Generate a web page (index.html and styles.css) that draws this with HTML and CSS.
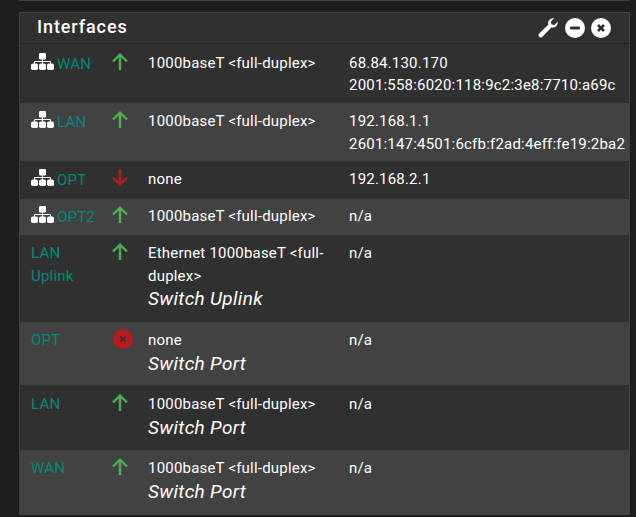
FILE: index.html
```html
<!DOCTYPE html>
<html lang="en">

<head>
    <meta charset="UTF-8">
    <title>Interfaces</title>
    <link rel="stylesheet" href="styles.css">
</head>

<body>

    <div class="prev-panel"></div>

    <div class="panel">

        <div class="panel-heading">
            <h2>Interfaces</h2>
            <div class="panel-icons">
                <svg class="wrench" width="22" height="22" viewBox="0 0 22 22"><path fill="#fff" d="M20.6 4.6c.3 1.800-.2 3.500-1.500 4.700-1.300 1.300-3.100 1.700-4.800 1.300L5.400 19.800c-.9.900-2.300.9-3.200 0-.9-.9-.9-2.300 0-3.200l9.100-8.900c-.5-1.700 0-3.600 1.300-4.900 1.200-1.200 2.900-1.700 4.500-1.500l-3.200 3.100.7 3 3 .7 3-3.500z"/></svg>
                <span class="round-btn"><svg width="20" height="20" viewBox="0 0 20 20"><rect x="5" y="8.500" width="10" height="3" rx="1" fill="#303030"/></svg></span>
                <span class="round-btn"><svg width="20" height="20" viewBox="0 0 20 20"><path d="M7 7l6 6M13 7l-6 6" stroke="#303030" stroke-width="2.600"/></svg></span>
            </div>
        </div>

        <div class="row row-wan">
            <div class="col-name"><svg class="net"><use href="#sitemap"/></svg><a href="#">WAN</a></div>
            <div class="col-status"><svg class="arrow"><use href="#up"/></svg></div>
            <div class="col-media">1000baseT &lt;full-duplex&gt;</div>
            <div class="col-ip">68.84.130.170<br>2001:558:6020:118:9c2:3e8:7710:a69c</div>
        </div>

        <div class="row row-lan">
            <div class="col-name"><svg class="net"><use href="#sitemap"/></svg><a href="#">LAN</a></div>
            <div class="col-status"><svg class="arrow"><use href="#up"/></svg></div>
            <div class="col-media">1000baseT &lt;full-duplex&gt;</div>
            <div class="col-ip">192.168.1.1<br>2601:147:4501:6cfb:f2ad:4eff:fe19:2ba2</div>
        </div>

        <div class="row row-opt">
            <div class="col-name"><svg class="net"><use href="#sitemap"/></svg><a href="#">OPT</a></div>
            <div class="col-status"><svg class="arrow"><use href="#down"/></svg></div>
            <div class="col-media">none</div>
            <div class="col-ip">192.168.2.1</div>
        </div>

        <div class="row row-opt2">
            <div class="col-name"><svg class="net"><use href="#sitemap"/></svg><a href="#">OPT2</a></div>
            <div class="col-status"><svg class="arrow"><use href="#up"/></svg></div>
            <div class="col-media">1000baseT &lt;full-duplex&gt;</div>
            <div class="col-ip">n/a</div>
        </div>

        <div class="row row-uplink">
            <div class="col-name"><a href="#">LAN Uplink</a></div>
            <div class="col-status"><svg class="arrow"><use href="#up"/></svg></div>
            <div class="col-media">Ethernet 1000baseT &lt;full-duplex&gt;<em>Switch Uplink</em></div>
            <div class="col-ip">n/a</div>
        </div>

        <div class="row row-port">
            <div class="col-name"><a href="#">OPT</a></div>
            <div class="col-status"><span class="no-link"><svg width="20" height="20" viewBox="0 0 20 20"><path d="M7.200 7.200l5.600 5.600M12.800 7.200l-5.600 5.600" stroke="#4a2a2a" stroke-width="2.200"/></svg></span></div>
            <div class="col-media">none<em>Switch Port</em></div>
            <div class="col-ip">n/a</div>
        </div>

        <div class="row row-low">
            <div class="col-name"><a href="#">LAN</a></div>
            <div class="col-status"><svg class="arrow"><use href="#up"/></svg></div>
            <div class="col-media">1000baseT &lt;full-duplex&gt;<em>Switch Port</em></div>
            <div class="col-ip">n/a</div>
        </div>

        <div class="row">
            <div class="col-name"><a href="#">WAN</a></div>
            <div class="col-status"><svg class="arrow"><use href="#up"/></svg></div>
            <div class="col-media">1000baseT &lt;full-duplex&gt;<em>Switch Port</em></div>
            <div class="col-ip">n/a</div>
        </div>

    </div>

    <svg class="defs" width="0" height="0">
        <symbol id="sitemap" viewBox="0 0 23 17">
            <g fill="#fff">
                <rect x="8" width="7" height="6.500" rx="1.200"/>
                <rect y="10.500" width="7" height="6.500" rx="1.800"/>
                <rect x="8" y="10.500" width="7" height="6.500" rx="1.800"/>
                <rect x="16" y="10.500" width="7" height="6.500" rx="1.800"/>
            </g>
            <path fill="none" stroke="#fff" d="M11.500 6v5M3.500 11V8.500h16V11"/>
        </symbol>
        <symbol id="up" viewBox="0 0 16 17">
            <path fill="none" stroke="#4caf50" stroke-width="2.400" d="M8 17V2M1 8.500L8 1.700l7 6.800"/>
        </symbol>
        <symbol id="down" viewBox="0 0 16 17">
            <path fill="none" stroke="#b71c1c" stroke-width="2.400" d="M8 0V15M1 8.500l7 6.800 7-6.800"/>
        </symbol>
    </svg>

</body>

</html>
```

FILE: styles.css
```css
* {
    margin: 0;
    padding: 0;
    box-sizing: border-box;
}

html,
body {
    height: 517px;
    overflow: hidden;
}

body {
    background-color: #1e1e1e;
    font-family: Roboto, "Liberation Sans", sans-serif;
    font-size: 15px;
    line-height: 22.5px;
    letter-spacing: .2px;
    color: #fff;
    padding-left: 19px;
    padding-right: 6px;
}

.prev-panel {
    height: 1px;
    background-color: #424242;
    margin-bottom: 11px;
}

.panel {
    background-color: #303030;
    border: 1px solid #424242;
    border-bottom: 0;
}

.panel-heading {
    display: flex;
    justify-content: space-between;
    align-items: center;
    height: 31px;
    padding: 0 18px 1px 17px;
    border-bottom: 1px solid #232323;
}

.panel-heading h2 {
    font-size: 18px;
    font-weight: 500;
    letter-spacing: .9px;
}

.panel-icons {
    display: flex;
    align-items: center;
    gap: 6px;
}

.round-btn {
    display: block;
    width: 20px;
    height: 20px;
    border-radius: 50%;
    background-color: #fff;
}

.round-btn svg,
.no-link svg {
    display: block;
}

.row {
    display: flex;
    padding: 7px 0 0 11px;
    height: 65px;
}

.row:nth-child(odd) {
    background-color: #424242;
}

.row-wan {
    height: 59px;
    padding-top: 7.5px;
}

.row-lan {
    height: 58px;
}

.row-opt {
    height: 38px;
}

.row-opt2 {
    height: 36px;
    padding-top: 6px;
}

.row-uplink {
    height: 87px;
}

.row-port {
    height: 63px;
}

.row-low {
    padding-top: 8px;
}

.col-name {
    display: flex;
    align-items: flex-start;
    width: 80px;
    padding-right: 13px;
}

.col-name a {
    color: #00897b;
    text-decoration: none;
}

.net {
    width: 23px;
    height: 17px;
    margin: 1px 3px 0 0;
    flex: none;
}

.net + a {
    margin-top: 1px;
}

.col-status {
    width: 37px;
}

.arrow {
    display: block;
    width: 16px;
    height: 17px;
    margin-left: 1px;
    margin-top: 1px;
}

.no-link {
    display: block;
    width: 20px;
    height: 20px;
    border-radius: 50%;
    background-color: #b71c1c;
    margin-left: 2px;
}

.col-media {
    width: 201px;
    padding-right: 20px;
}

.col-media em {
    display: block;
    font-size: 19px;
    line-height: 24px;
    letter-spacing: .33px;
}

.col-ip {
    white-space: nowrap;
}

.defs {
    position: absolute;
}
```
